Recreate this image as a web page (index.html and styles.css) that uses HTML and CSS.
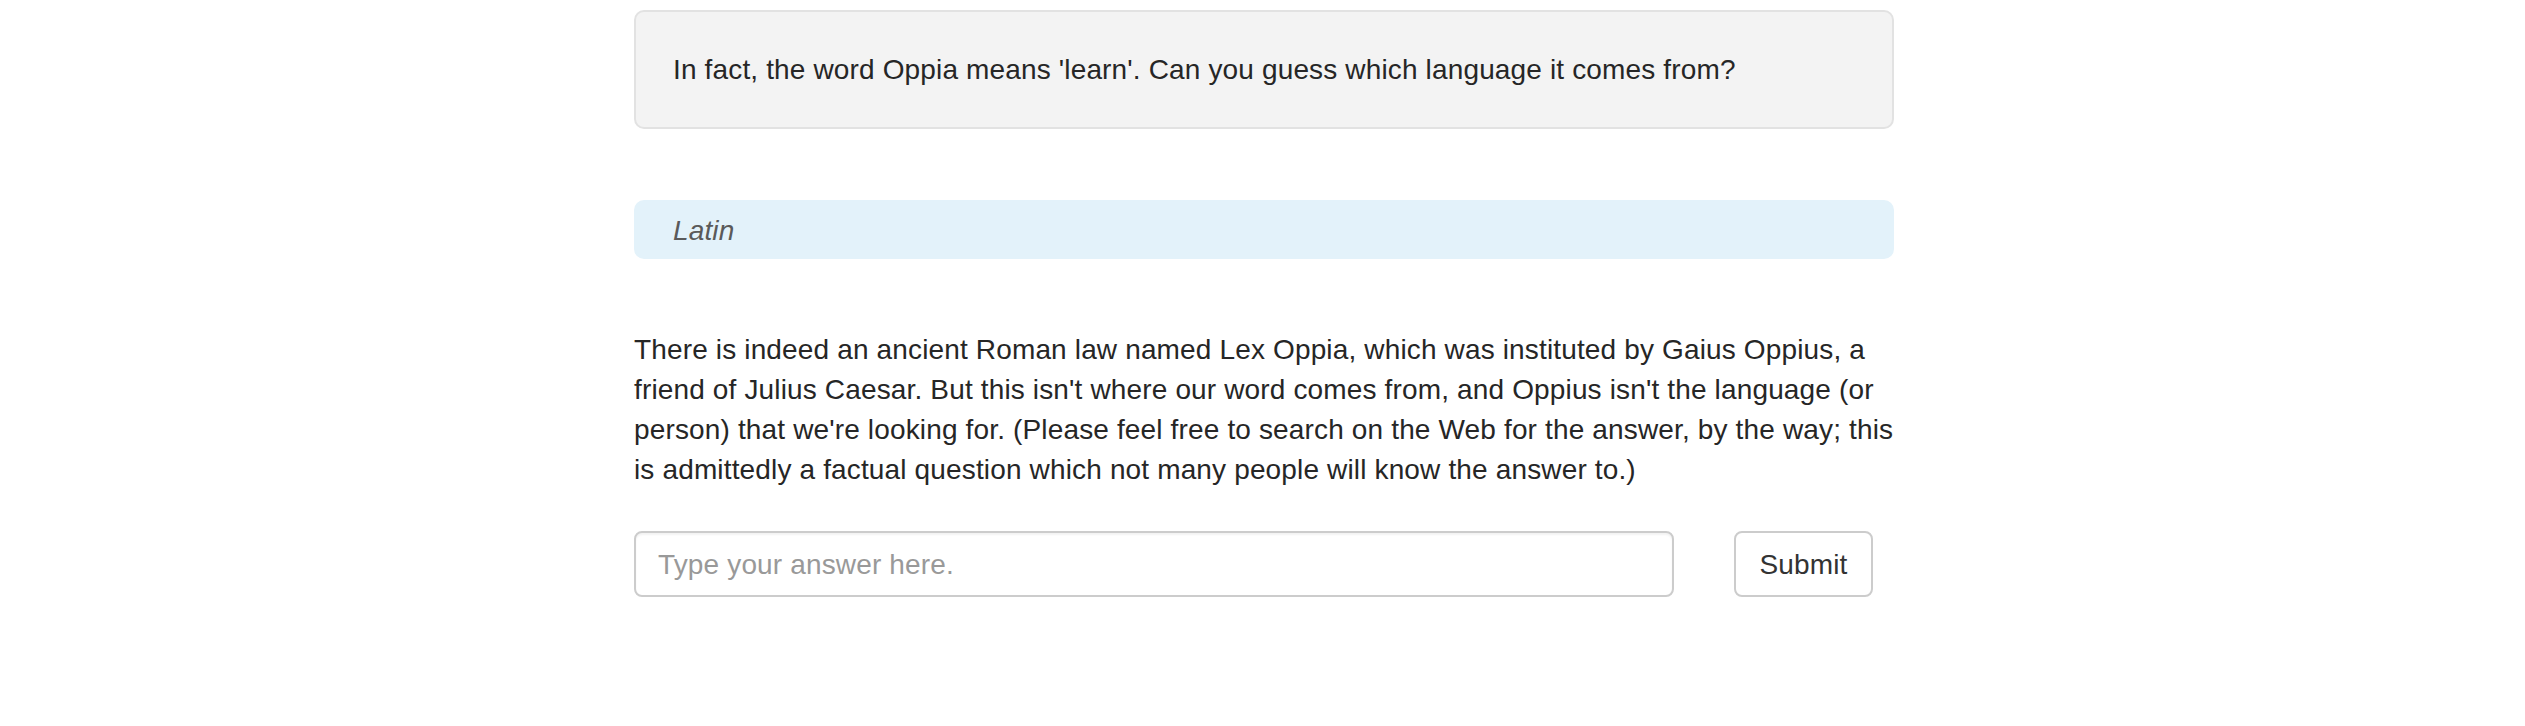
FILE: index.html
```html
<!DOCTYPE html>
<html lang="en">
<head>
<meta charset="utf-8">
<title>Oppia</title>
<link rel="stylesheet" href="styles.css">
</head>
<body>
<main class="page">
  <div class="prompt">In fact, the word Oppia means 'learn'. Can you guess which language it comes from?</div>
  <div class="answer">Latin</div>
  <p class="feedback">There is indeed an ancient Roman law named Lex Oppia, which was instituted by Gaius Oppius, a friend of Julius Caesar. But this isn't where our word comes from, and Oppius isn't the language (or person) that we're looking for. (Please feel free to search on the Web for the answer, by the way; this is admittedly a factual question which not many people will know the answer to.)</p>
  <form class="answer-form">
    <input class="answer-input" type="text" placeholder="Type your answer here.">
    <button class="submit" type="button">Submit</button>
  </form>
</main>
</body>
</html>
```

FILE: styles.css
```css
html, body {
  margin: 0;
  padding: 0;
  background: #ffffff;
}

body {
  padding-left: 3px;
  font-family: "Liberation Sans", Arial, Helvetica, sans-serif;
  font-size: 28px;
  line-height: 40px;
  letter-spacing: 0.15px;
  color: #262626;
}

.page {
  width: 1260px;
  margin: 0 auto;
  padding-top: 10px;
}

.prompt {
  background: #f3f3f3;
  border: 2px solid #e2e2e2;
  border-radius: 10px;
  padding: 38px 37px 37px;
}

.answer {
  margin-top: 71px;
  background: #e3f2fa;
  border-radius: 10px;
  padding: 11px 39px 8px;
  font-style: italic;
  color: #5a5a5a;
}

.feedback {
  margin: 71px 0 0;
}

.answer-form {
  display: flex;
  align-items: flex-start;
  margin-top: 41px;
}

.answer-input {
  box-sizing: border-box;
  width: 1040px;
  height: 66px;
  border: 2px solid #cccccc;
  border-radius: 8px;
  padding: 2px 22px 0;
  font-family: "Liberation Sans", Arial, Helvetica, sans-serif;
  font-size: 28px;
  letter-spacing: 0.15px;
  color: #333;
  box-shadow: inset 0 2px 2px rgba(0, 0, 0, 0.05);
  outline: none;
}

.answer-input::placeholder {
  color: #999999;
}

.submit {
  box-sizing: border-box;
  margin-left: 60px;
  width: 139px;
  height: 66px;
  border: 2px solid #cccccc;
  border-radius: 8px;
  background: #ffffff;
  font-family: "Liberation Sans", Arial, Helvetica, sans-serif;
  font-size: 28px;
  letter-spacing: 0.15px;
  color: #333333;
  padding: 2px 0 0;
}
```
